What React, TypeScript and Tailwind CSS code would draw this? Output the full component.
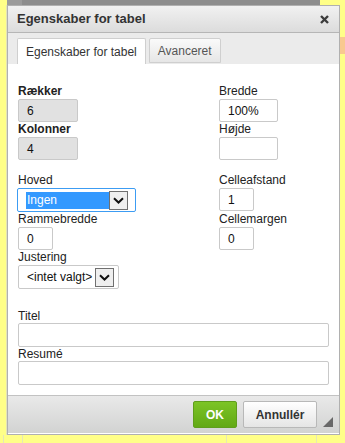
function Chevron() {
  return (
    <svg width="11" height="7" viewBox="0 0 11 7" fill="none">
      <path d="M1 1.2 L5.5 5.5 L10 1.2" stroke="#111" strokeWidth="2" />
    </svg>
  );
}

function Label({ children, bold = false }: { children: string; bold?: boolean }) {
  return (
    <div className={`h-[15px] text-[12px] leading-[15px] text-[#222] ${bold ? "font-bold" : ""}`}>
      {children}
    </div>
  );
}

function Field({
  value = "",
  width,
  disabled = false,
}: {
  value?: string;
  width: string;
  disabled?: boolean;
}) {
  return (
    <div
      className={`${width} flex h-[23px] items-center rounded-[2px] border border-[#c9c9c9] pl-[8px] text-[12px] text-[#111] ${
        disabled ? "bg-[#e1e1e1]" : "bg-white"
      }`}
    >
      {value}
    </div>
  );
}

export default function App() {
  return (
    <div className="flex h-[443px] w-[345px] flex-col overflow-hidden bg-[#ffff88] font-['Liberation_Sans',Arial,sans-serif]">
      {/* page behind the dialog */}
      <div className="flex h-[5px] shrink-0">
        <div className="w-[7px]" />
        <div className="w-[15px] bg-[#9b9b9b]" />
        <div className="w-[298px] bg-[#8d8d8d]" />
      </div>

      <div className="flex h-[430px] shrink-0">
        <div className="w-[7px] border-r border-[#e4e4b8]" />

        {/* dialog */}
        <div className="flex w-[333px] flex-col border border-[#b0b0b0] bg-white">
          <div className="flex h-[27px] items-center justify-between border-b border-[#b6b6b6] bg-gradient-to-b from-[#f1f1f1] to-[#dcdcdc] pl-[9px] pr-[10px]">
            <span className="text-[13px] font-bold text-[#333]">Egenskaber for tabel</span>
            <svg width="9" height="9" viewBox="0 0 9 9">
              <path d="M1 1 L8 8 M8 1 L1 8" stroke="#3c3c3c" strokeWidth="2.4" />
            </svg>
          </div>

          <div className="flex h-[31px] items-end gap-[3px] bg-[#ebebeb] pl-[9px]">
            <div className="flex h-[26px] items-center rounded-t-[2px] border border-b-0 border-[#cfcfcf] bg-white px-[8px] text-[12px] text-[#333]">
              Egenskaber for tabel
            </div>
            <div className="mb-[1px] flex h-[25px] items-center rounded-t-[2px] border border-[#cfcfcf] bg-gradient-to-b from-[#fafafa] to-[#e6e6e6] px-[8px] text-[12px] text-[#555]">
              Avanceret
            </div>
          </div>

          <div className="flex h-[331px] flex-col bg-white px-[10px] pt-[20px]">
            <div className="grid grid-cols-[201px_1fr]">
              <div>
                <Label bold>Rækker</Label>
                <Field value="6" width="w-[60px]" disabled />
              </div>
              <div>
                <Label>Bredde</Label>
                <Field value="100%" width="w-[59px]" />
              </div>
              <div>
                <Label bold>Kolonner</Label>
                <Field value="4" width="w-[60px]" disabled />
              </div>
              <div>
                <Label>Højde</Label>
                <Field width="w-[59px]" />
              </div>

              <div className="mt-[13px]">
                <Label>Hoved</Label>
                <div className="-ml-[1px] flex h-[24px] w-[119px] items-center rounded-[2px] border border-[#3c9cf3] bg-white pl-[8px]">
                  <div className="flex h-[17px] w-[83px] items-center bg-[#3399ff] pl-[1px] text-[12px] text-white">
                    Ingen
                  </div>
                  <div className="flex h-[19px] w-[19px] items-center justify-center border border-[#707070] bg-[#efefef]">
                    <Chevron />
                  </div>
                </div>
              </div>
              <div className="mt-[13px]">
                <Label>Celleafstand</Label>
                <Field value="1" width="w-[35px]" />
              </div>

              <div>
                <Label>Rammebredde</Label>
                <Field value="0" width="w-[35px]" />
              </div>
              <div>
                <Label>Cellemargen</Label>
                <Field value="0" width="w-[35px]" />
              </div>

              <div>
                <Label>Justering</Label>
                <div className="flex h-[24px] w-[101px] items-center rounded-[2px] border border-[#c9c9c9] bg-white pl-[8px]">
                  <span className="w-[68px] text-[12px] text-[#111]">&lt;intet valgt&gt;</span>
                  <div className="flex h-[19px] w-[19px] items-center justify-center border border-[#707070] bg-[#efefef]">
                    <Chevron />
                  </div>
                </div>
              </div>
            </div>

            <div className="mt-[20px]">
              <div className="h-[14px] text-[12px] leading-[14px] text-[#222]">Titel</div>
              <div className="h-[24px] rounded-[2px] border border-[#c9c9c9] bg-white" />
              <div className="h-[14px] text-[12px] leading-[14px] text-[#222]">Resumé</div>
              <div className="h-[24px] rounded-[2px] border border-[#c9c9c9] bg-white" />
            </div>
          </div>

          <div className="flex h-[38px] justify-end border-t border-[#c2c2c2] bg-gradient-to-b from-[#e9e9e9] to-[#d2d3d2] pr-[6px] pt-[5px]">
            <button className="flex h-[27px] w-[44px] items-center justify-center rounded-[2px] border border-[#5f9e1c] bg-gradient-to-b from-[#7cc426] to-[#62a914] text-[12px] font-bold text-white">
              OK
            </button>
            <button className="ml-[6px] flex h-[27px] w-[74px] items-center justify-center rounded-[2px] border border-[#b8b8b8] bg-gradient-to-b from-[#ffffff] to-[#e5e5e5] text-[12px] font-bold text-[#333]">
              Annullér
            </button>
            <svg className="ml-[6px] mt-[16px]" width="10" height="10" viewBox="0 0 10 10">
              <polygon points="10,0 10,10 0,10" fill="#686868" />
            </svg>
          </div>
        </div>

        <div className="flex-1 pt-[32px]">
          <div className="h-[17px] bg-[#f9c98f]" />
        </div>
      </div>

      <div className="flex flex-1">
        <div className="ml-[3px] w-[20px] border-l border-r border-[#e6e6b8]" />
        <div className="ml-[203px] w-[91px] border-l border-r border-[#e6e6b8]" />
      </div>
    </div>
  );
}
